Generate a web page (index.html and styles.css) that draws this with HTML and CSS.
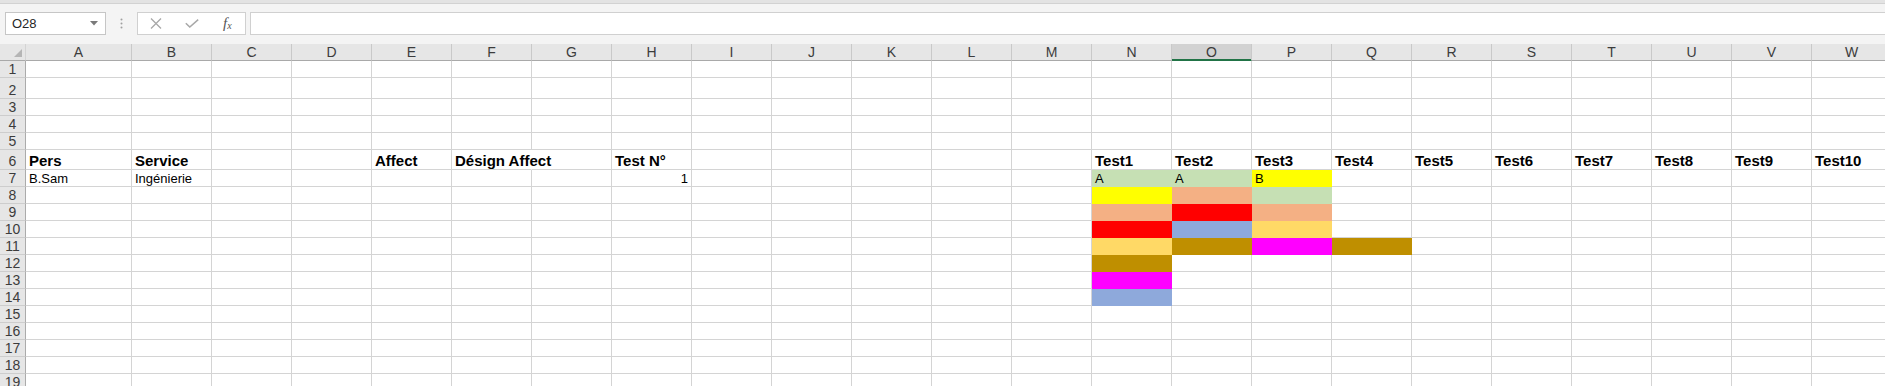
FILE: index.html
```html
<!DOCTYPE html>
<html lang="fr">
<head>
    <meta charset="UTF-8">
    <meta name="viewport" content="width=device-width, initial-scale=1.0">
    <title>Classeur - Tests</title>
    <link rel="stylesheet" href="styles.css">
</head>
<body>
    <div class="top-strip"></div>

    <div class="formula-bar">
        <div class="name-box">
            <span>O28</span>
            <svg class="drop" width="8" height="5" viewBox="0 0 8 5"><path d="M0 0 L8 0 L4 4.5 Z" fill="#7a7a7a"/></svg>
        </div>
        <div class="grip">
            <svg width="3" height="11" viewBox="0 0 3 11">
                <circle cx="1.5" cy="1.5" r="1" fill="#a0a0a0"/>
                <circle cx="1.5" cy="5.5" r="1" fill="#a0a0a0"/>
                <circle cx="1.5" cy="9.5" r="1" fill="#a0a0a0"/>
            </svg>
        </div>
        <div class="fx-buttons">
            <svg class="btn-cancel" width="12" height="11" viewBox="0 0 12 11">
                <path d="M1 0.5 L11 10.5 M11 0.5 L1 10.5" stroke="#a8a8a8" stroke-width="1.3" fill="none"/>
            </svg>
            <svg class="btn-enter" width="14" height="9" viewBox="0 0 14 9">
                <path d="M0.8 4.2 L4.8 8 L13.2 0.6" stroke="#a8a8a8" stroke-width="1.5" fill="none"/>
            </svg>
            <span class="fx">f<sub>x</sub></span>
        </div>
        <div class="formula-input"></div>
    </div>

    <div class="sheet" id="sheet"></div>

    <script>
        const cols = 'ABCDEFGHIJKLMNOPQRSTUVW'.split('');
        const rowCount = 19;
        const selectedCol = 'O';

        const values = {
            A6: 'Pers', B6: 'Service', E6: 'Affect', F6: 'Désign Affect', H6: 'Test N°',
            N6: 'Test1', O6: 'Test2', P6: 'Test3', Q6: 'Test4', R6: 'Test5',
            S6: 'Test6', T6: 'Test7', U6: 'Test8', V6: 'Test9', W6: 'Test10',
            A7: 'B.Sam', B7: 'Ingénierie', H7: 1,
            N7: 'A', O7: 'A', P7: 'B'
        };

        // couleurs de remplissage
        const fills = {
            N7: 'green', O7: 'green', P7: 'yellow',
            N8: 'yellow', O8: 'salmon', P8: 'green',
            N9: 'salmon', O9: 'red', P9: 'salmon',
            N10: 'red', O10: 'blue', P10: 'gold',
            N11: 'gold', O11: 'bronze', P11: 'magenta', Q11: 'bronze',
            N12: 'bronze',
            N13: 'magenta',
            N14: 'blue'
        };

        // texte qui déborde sur la cellule voisine
        const spills = ['F6'];

        function buildSheet() {
            const sheet = document.getElementById('sheet');
            let html = `<div class="corner"><span class="select-all"></span></div>`;
            cols.forEach(c => {
                let cls = c === selectedCol ? 'col-head selected' : 'col-head';
                html += `<div class="${cls}">${c}</div>`;
            });
            for (let r = 1; r <= rowCount; r++) {
                html += `<div class="row-head">${r}</div>`;
                cols.forEach(c => {
                    const ref = c + r;
                    const v = values[ref];
                    let cls = 'cell';
                    if (r === 6) cls += ' title';
                    if (typeof v === 'number') cls += ' num';
                    if (fills[ref]) cls += ' fill-' + fills[ref];
                    if (spills.includes(ref)) cls += ' spill';
                    html += `<div class="${cls}">${v !== undefined ? v : ''}</div>`;
                });
            }
            sheet.innerHTML = html;
        }

        buildSheet();
    </script>
</body>
</html>
```

FILE: styles.css
```css
body {
    margin: 0;
    font-family: "Liberation Sans", Arial, sans-serif;
    background-color: #ffffff;
    overflow: hidden;
    height: 386px;
}

.top-strip {
    height: 3px;
    background-color: #e3e3e3;
    border-bottom: 1px solid #d2d2d2;
}

.formula-bar {
    display: flex;
    align-items: flex-start;
    height: 40px;
    padding-top: 8px;
    box-sizing: border-box;
    background-color: #f4f4f4;
}

.name-box {
    width: 101px;
    height: 23px;
    margin-left: 5px;
    box-sizing: border-box;
    border: 1px solid #c6c6c6;
    background-color: #ffffff;
    display: flex;
    align-items: center;
    justify-content: space-between;
    padding: 0 7px 0 6px;
    font-size: 13px;
    color: #262626;
}

.grip {
    width: 31px;
    height: 23px;
    display: flex;
    align-items: center;
    justify-content: center;
}

.fx-buttons {
    width: 109px;
    height: 23px;
    box-sizing: border-box;
    border: 1px solid #d0d0d0;
    background-color: #ffffff;
    display: flex;
    align-items: center;
    padding-left: 12px;
}

.btn-cancel {
    margin-right: 23px;
}

.btn-enter {
    margin-right: 24px;
}

.fx {
    font-family: "Liberation Serif", "Times New Roman", serif;
    font-style: italic;
    font-size: 15px;
    color: #555555;
    line-height: 1;
}

.fx sub {
    font-size: 10px;
    vertical-align: -1px;
}

.formula-input {
    flex: 1;
    height: 23px;
    margin-left: 4px;
    box-sizing: border-box;
    border: 1px solid #d0d0d0;
    border-right: none;
    background-color: #ffffff;
}

.sheet {
    display: grid;
    grid-template-columns: 26px 106px repeat(22, 80px);
    grid-template-rows: 17px 17px 21px 17px 17px 17px 20px repeat(13, 17px);
    width: max-content;
}

.sheet > div {
    box-sizing: border-box;
    border-right: 1px solid #d4d4d4;
    border-bottom: 1px solid #d4d4d4;
}

.corner {
    background-color: #e6e6e6;
    display: flex;
    justify-content: flex-end;
    align-items: flex-end;
    padding: 0 3px 3px 0;
}

.sheet > .corner,
.sheet > .col-head {
    border-bottom-color: #a9a9a9;
}

.select-all {
    width: 0;
    height: 0;
    border-style: solid;
    border-width: 0 0 8px 8px;
    border-color: transparent transparent #b5b5b5 transparent;
}

.col-head {
    background-color: #e6e6e6;
    color: #3c3c3c;
    font-size: 14px;
    text-align: center;
    line-height: 16px;
}

.sheet > .col-head {
    border-right-color: #c9c9c9;
}

.col-head.selected {
    background-color: #d2d2d2;
    box-shadow: inset 0 -1px 0 #217346;
}

.sheet > .col-head.selected {
    border-bottom-color: #217346;
}

.row-head {
    background-color: #e6e6e6;
    color: #3c3c3c;
    font-size: 14px;
    display: flex;
    justify-content: center;
    align-items: flex-end;
    line-height: 15px;
}

.sheet > .row-head {
    border-right-color: #ababab;
    border-bottom-color: #cdcdcd;
}

.cell {
    display: flex;
    align-items: flex-end;
    padding: 0 3px;
    font-size: 13px;
    color: #000000;
    white-space: nowrap;
    overflow: visible;
}

.cell.title {
    font-weight: bold;
    font-size: 15px;
}

.cell.num {
    justify-content: flex-end;
}

.sheet > .cell.spill {
    border-right-color: transparent;
}

.sheet > .fill-green { background-color: #c6e0b4; border-color: #c6e0b4; }
.sheet > .fill-yellow { background-color: #ffff00; border-color: #ffff00; }
.sheet > .fill-salmon { background-color: #f4b084; border-color: #f4b084; }
.sheet > .fill-red { background-color: #ff0000; border-color: #ff0000; }
.sheet > .fill-gold { background-color: #ffd966; border-color: #ffd966; }
.sheet > .fill-bronze { background-color: #bf8f00; border-color: #bf8f00; }
.sheet > .fill-magenta { background-color: #ff00ff; border-color: #ff00ff; }
.sheet > .fill-blue { background-color: #8ea9db; border-color: #8ea9db; }
```
